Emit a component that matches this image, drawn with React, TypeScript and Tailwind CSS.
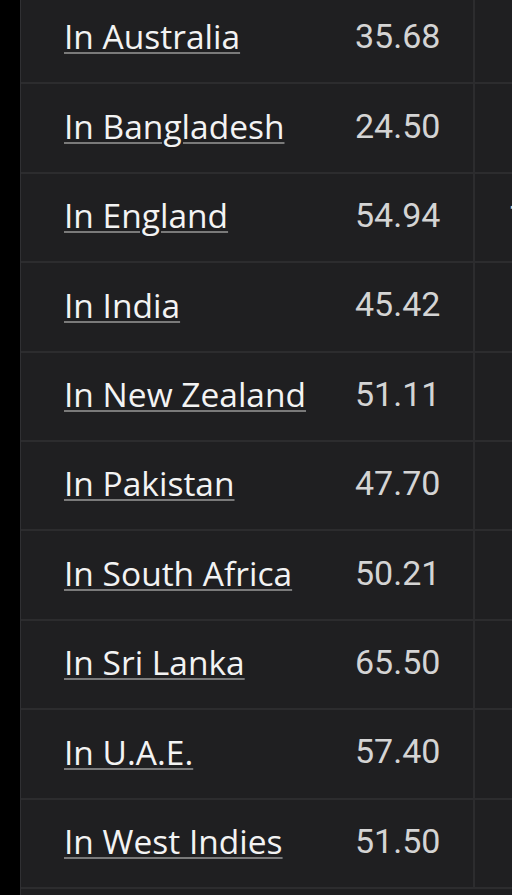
import React from "react";

const rows: [string, string, string][] = [
  ["In Australia", "35.68", ""],
  ["In Bangladesh", "24.50", ""],
  ["In England", "54.94", "1"],
  ["In India", "45.42", ""],
  ["In New Zealand", "51.11", ""],
  ["In Pakistan", "47.70", ""],
  ["In South Africa", "50.21", ""],
  ["In Sri Lanka", "65.50", ""],
  ["In U.A.E.", "57.40", ""],
  ["In West Indies", "51.50", ""],
];

export default function App() {
  return (
    <div className="w-[512px] h-[895px] bg-black overflow-hidden flex">
      <div className="w-[20px] shrink-0 bg-black" />
      <div className="flex-1 bg-[#1f1f21] border-l border-[#303033] mt-[-5px]">
        {rows.map(([name, val, extra], i) => (
          <div
            key={i}
            className="grid grid-cols-[334px_118px_1fr] h-[89.4px] border-b-2 border-[#2c2c2e]"
          >
            <div className="flex items-center pl-[43px] pb-[3px]">
              <a
                className="text-[33.5px] text-[#f3f3f3] underline decoration-[#7a7a7a] decoration-2 underline-offset-[3px] leading-none whitespace-nowrap"
                style={{ fontFamily: '"Open Sans", sans-serif' }}
              >
                {name}
              </a>
            </div>
            <div
              className="flex items-center pb-[5px] text-[34px] text-[#d4d4d4] leading-none"
              style={{ fontFamily: "Roboto, sans-serif" }}
            >
              {val}
            </div>
            <div
              className="flex items-center pl-[33px] pb-[5px] border-l-2 border-[#2c2c2e] text-[34px] text-[#d4d4d4] leading-none overflow-hidden whitespace-nowrap"
              style={{ fontFamily: "Roboto, sans-serif" }}
            >
              {extra}
            </div>
          </div>
        ))}
      </div>
    </div>
  );
}
